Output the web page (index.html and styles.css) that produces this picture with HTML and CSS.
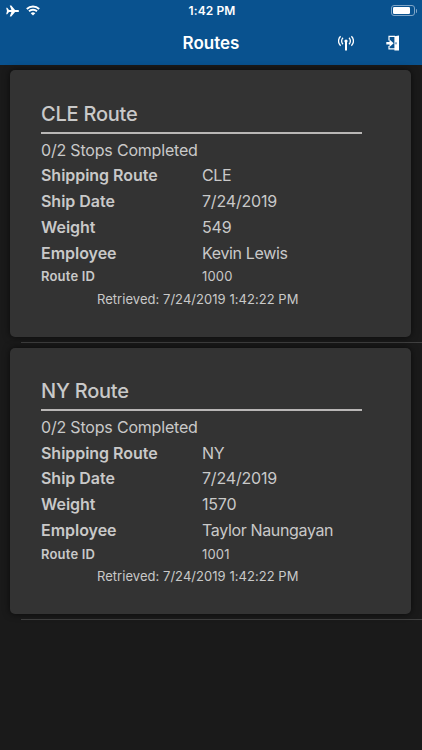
FILE: index.html
```html
<!DOCTYPE html>
<html lang="en">
<head>
<meta charset="utf-8">
<meta name="viewport" content="width=device-width, initial-scale=1">
<title>Routes</title>
<link rel="stylesheet" href="styles.css">
</head>
<body>
<header class="header">
  <div class="status">
    <div class="signals">
      <svg class="plane" viewBox="0 0 14 12"><path d="M0.2 2.6h1.1l1.8 2.3h2.5L3.9.2h1.6l3.9 4.7h2.6c.9 0 1.6.5 1.6 1.1s-.7 1.1-1.6 1.1H9.4l-3.9 4.7H3.9l1.7-4.7H3.1L1.3 9.4H.2L1 6z"/></svg>
      <svg class="wifi" viewBox="0 0 14 11"><path d="M.8 4A9 9 0 0 1 13.2 4M3 6.3a5.8 5.8 0 0 1 8 0"/><path class="fill" d="M4.7 8.2a3.4 3.4 0 0 1 4.6 0L7 10.6z"/></svg>
    </div>
    <span class="clock">1:42 PM</span>
    <div class="battery"><span class="shell"><span class="charge"></span></span><span class="tip"></span></div>
  </div>
  <nav class="bar">
    <h1 class="title">Routes</h1>
    <div class="actions">
      <svg class="antenna" viewBox="0 0 16 16"><path d="M2.6 1.3a6.4 6.4 0 0 0 0 9.4M5 2.8a4.4 4.4 0 0 0 0 6.4M13.4 1.3a6.4 6.4 0 0 1 0 9.4M11 2.8a4.4 4.4 0 0 1 0 6.4"/><circle cx="8" cy="6" r="1.6"/><path class="mast" d="M8 6v9.6"/></svg>
      <svg class="exit" viewBox="0 0 14 16"><path class="frame" d="M3 5.4V1.3h6M3 10.9v3h6"/><path class="solid" d="M8.4 1.3L13 .6V15.6H8.4zM.3 7h3.2V4.6l4.2 3.6-4.2 3.7V9.5H.3z"/><path class="knob" d="M10 7.3v2"/></svg>
    </div>
  </nav>
</header>
<main class="list">
  <section class="cell">
    <article class="card">
      <h2 class="name">CLE Route</h2>
      <p class="stops">0/2 Stops Completed</p>
      <dl class="fields">
        <dt>Shipping Route</dt><dd>CLE</dd>
        <dt>Ship Date</dt><dd class="figures">7/24/2019</dd>
        <dt>Weight</dt><dd class="figures">549</dd>
        <dt>Employee</dt><dd>Kevin Lewis</dd>
        <dt class="small">Route ID</dt><dd class="small">1000</dd>
      </dl>
      <p class="retrieved">Retrieved: 7/24/2019 1:42:22 PM</p>
    </article>
  </section>
  <section class="cell">
    <article class="card">
      <h2 class="name">NY Route</h2>
      <p class="stops">0/2 Stops Completed</p>
      <dl class="fields">
        <dt>Shipping Route</dt><dd>NY</dd>
        <dt>Ship Date</dt><dd class="figures">7/24/2019</dd>
        <dt>Weight</dt><dd class="figures">1570</dd>
        <dt>Employee</dt><dd>Taylor Naungayan</dd>
        <dt class="small">Route ID</dt><dd class="small">1001</dd>
      </dl>
      <p class="retrieved">Retrieved: 7/24/2019 1:42:22 PM</p>
    </article>
  </section>
</main>
</body>
</html>
```

FILE: styles.css
```css
* { box-sizing: border-box; margin: 0; padding: 0; }
body {
  height: 750px;
  overflow: hidden;
  background: #1a1a1a;
  color: #c9c9c9;
  font-family: Inter, "Liberation Sans", sans-serif;
}
.header { height: 65.4px; background: #09528f; color: #fff; }
.status {
  display: grid;
  grid-template-columns: 1fr auto 1fr;
  align-items: center;
  height: 21px;
  padding: 0 5px 0 6px;
}
.signals { display: flex; gap: 6.5px; align-items: center; }
.plane { width: 13.5px; height: 12px; fill: #fff; }
.wifi { width: 14px; height: 11px; fill: none; stroke: #fff; stroke-width: 1.9; }
.wifi .fill { fill: #fff; stroke: none; }
.clock { padding-left: 1px; font-size: 12px; font-weight: 600; letter-spacing: 0.1px; }
.battery { display: flex; align-items: center; justify-self: end; gap: 1px; }
.shell { display: block; width: 24px; height: 11.5px; padding: 1px; border: 1px solid #7fa5c7; border-radius: 3px; }
.charge { display: block; width: 17.5px; height: 7.5px; border-radius: 1.3px; background: #fff; }
.tip { width: 1.3px; height: 4px; border-radius: 0 2px 2px 0; background: #7fa5c7; }
.bar { display: grid; grid-template-columns: 1fr auto 1fr; align-items: center; height: 43px; }
.title { grid-column: 2; font-size: 17px; line-height: 22px; font-weight: 600; }
.actions { display: flex; align-items: center; justify-content: flex-end; gap: 31.5px; padding-right: 22.5px; }
.antenna { width: 16px; height: 16px; fill: #fff; }
.antenna path { fill: none; stroke: #fff; stroke-width: 1.3; }
.antenna .mast { stroke-width: 2; }
.exit { width: 14px; height: 16px; fill: #fff; }
.exit .frame { fill: none; stroke: #fff; stroke-width: 1.2; }
.exit .knob { stroke: #09528f; stroke-width: 1; }
.cell {
  height: 277.3px;
  padding: 5px 11px 0 10.4px;
  background: linear-gradient(#404040, #404040) 21px 100% / 100% 1px no-repeat;
}
.card {
  height: 266.6px;
  padding: 31.4px 30.6px 0;
  border-radius: 5px;
  background: #333;
  box-shadow: 0 0 7px rgba(0, 0, 0, 0.65);
}
.name {
  width: 321.5px;
  height: 32.1px;
  border-bottom: 2px solid #b9b7b6;
  font-size: 20px;
  line-height: 24px;
  font-weight: 500;
  letter-spacing: -0.23px;
}
.stops { height: 29.4px; padding-top: 4px; font-size: 16px; line-height: 24px; letter-spacing: -0.19px; }
.fields {
  display: grid;
  grid-template-columns: 161px 1fr;
  grid-template-rows: repeat(4, 25.8px) 21.6px;
  font-size: 16px;
  line-height: 25.8px;
}
.fields dt { font-weight: 600; letter-spacing: -0.03px; }
.fields dd { letter-spacing: -0.35px; }
.fields .figures { letter-spacing: -0.18px; }
.fields .small { font-size: 13px; line-height: 21.6px; letter-spacing: 0.2px; }
.retrieved { padding-left: 56px; font-size: 13px; line-height: 22px; letter-spacing: 0.04px; }
```
